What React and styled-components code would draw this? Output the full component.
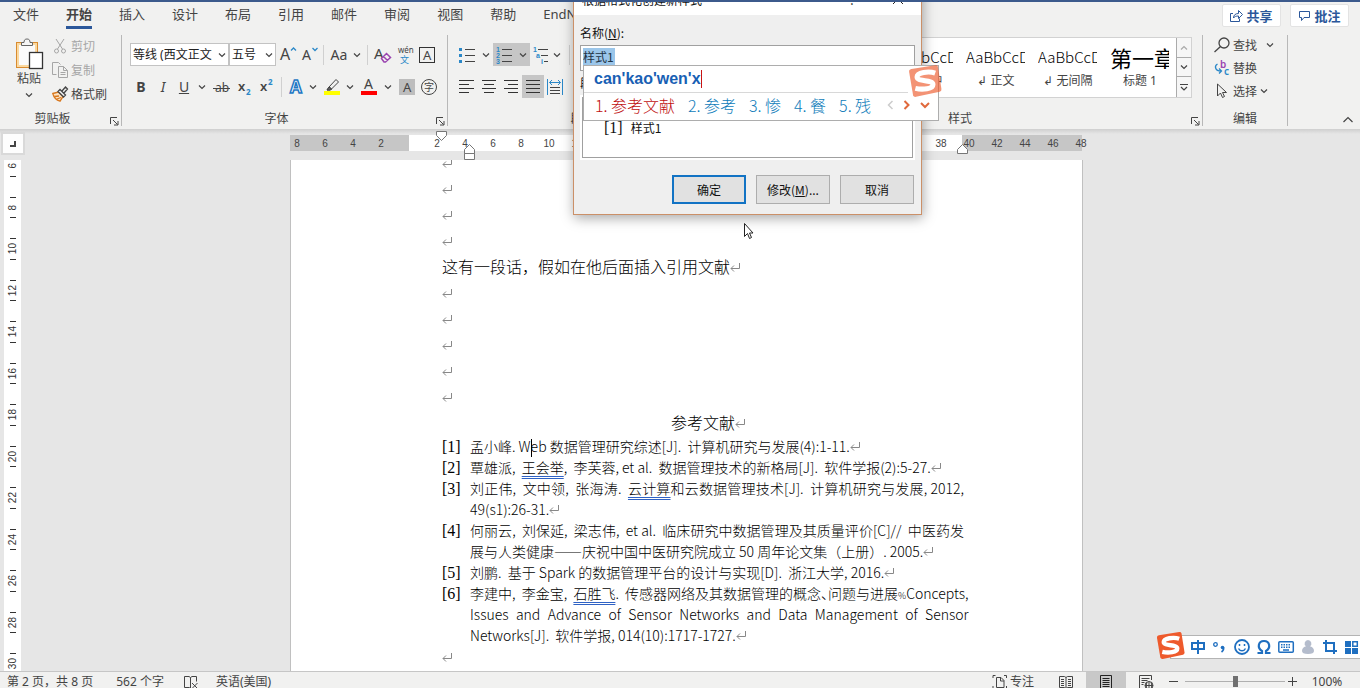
import React from "react";
import styled, { createGlobalStyle } from "styled-components";

const ui = `"Noto Sans CJK SC", "Noto Sans", sans-serif`;
const uiLatin = `"Noto Sans", "Noto Sans CJK SC", sans-serif`;

const GlobalStyle = createGlobalStyle`
  *, *::before, *::after { box-sizing: border-box; }
  html, body, #root { height: 100%; }
  body { margin: 0; overflow: hidden; font-family: ${uiLatin}; font-size: 12px; color: #444; background: #e6e6e6; }
  button, input, select { font: inherit; color: inherit; }
  button { border: 0; padding: 0; background: none; }
  svg { display: block; flex: none; overflow: visible; }
`;

const Window = styled.div`
  position: relative;
  display: flex;
  flex-direction: column;
  height: 100vh;
  overflow: hidden;
  border-top: 2px solid #3c5a8c;
`;

/* ---------- tabs ---------- */
const TabBar = styled.nav`
  display: flex;
  align-items: center;
  height: 33px;
  padding: 0 11px 6px 13px;
  background: #f1f1f0;
  flex: none;
`;
const Tabs = styled.div`
  display: flex;
  gap: 27px;
  flex: 1;
  overflow: hidden;
`;
const Tab = styled.button`
  font-size: 13px;
  line-height: 22px;
  height: 27px;
  white-space: nowrap;
  border-bottom: 3px solid ${(p) => (p.$active ? "#2b579a" : "transparent")};
  font-weight: ${(p) => (p.$active ? 700 : 400)};
`;
const TopButton = styled.button`
  display: flex;
  align-items: center;
  justify-content: center;
  gap: 3px;
  width: 59px;
  height: 23px;
  margin-left: 9px;
  background: #fff;
  border: 1px solid #e3e3e3;
  border-radius: 2px;
  color: #2b579a;
  font-size: 13px;
  font-weight: 700;
`;

/* ---------- ribbon ---------- */
const Ribbon = styled.div`
  display: flex;
  height: 94px;
  padding-bottom: 3px;
  background: #f1f1f0;
  flex: none;
`;
const Group = styled.section`
  display: flex;
  flex-direction: column;
  justify-content: space-between;
  width: ${(p) => (p.$width ? `${p.$width}px` : "auto")};
  flex: ${(p) => (p.$width ? "none" : "1")};
  border-right: 1px solid #b8b8b8;
  min-width: 0;
`;
const GroupFooter = styled.div`
  display: flex;
  align-items: center;
  height: 14px;
  line-height: 14px;
  text-align: center;
`;
const GroupName = styled.span`flex: 1;`;
const Launcher = styled.button`
  width: 16px;
  height: 10px;
  margin-top: 5px;
  padding-left: 5px;
`;
const ToolRows = styled.div`
  display: flex;
  flex-direction: column;
  gap: 9px;
  padding: 8px 0 0 8px;
`;
const ToolRow = styled.div`
  display: flex;
  align-items: center;
  height: 23px;
`;
const Tool = styled.button`
  display: flex;
  align-items: center;
  justify-content: center;
  width: ${(p) => p.$w || 22}px;
  height: 23px;
  font-size: 14px;
  background: ${(p) => (p.$on ? "#c6c6c6" : "none")};
  flex: none;
`;
const Rule = styled.span`
  width: 1px;
  height: 20px;
  margin: 0 ${(p) => p.$gap}px;
  background: #d0d0d0;
`;
const Combo = styled.label`
  display: grid;
  align-items: center;
  width: ${(p) => p.$w}px;
  height: 23px;
  & > * { grid-area: 1 / 1; }
  & > svg { justify-self: end; margin-right: 3px; pointer-events: none; }
`;
const Select = styled.select`
  appearance: none;
  width: 100%;
  height: 23px;
  padding: 0 16px 0 2px;
  border: 1px solid #c3c3c3;
  border-radius: 0;
  background: #fff;
  color: #222;
  text-overflow: clip;
`;
const ClipboardTools = styled.div`
  display: flex;
  padding-left: 13px;
`;
const PasteButton = styled.button`
  display: flex;
  flex-direction: column;
  align-items: center;
  width: 32px;
  margin-right: 7px;
  padding-top: 3px;
  line-height: 18px;
`;
const CommandList = styled.div`
  display: flex;
  flex-direction: column;
  gap: ${(p) => p.$gap}px;
  padding-left: ${(p) => p.$pad || 0}px;
`;
const Command = styled.button`
  display: flex;
  align-items: center;
  gap: 3px;
  height: ${(p) => p.$h}px;
  padding-bottom: 1px;
  color: ${(p) => (p.disabled ? "#a6a6a6" : "#444")};
`;
const Gallery = styled.div`
  display: flex;
  height: 61px;
  margin: 2px 10px 0;
  border: 1px solid #d2d2d2;
  background: #fff;
`;
const GalleryItems = styled.div`
  display: flex;
  justify-content: flex-end;
  flex: 1;
  overflow: hidden;
`;
const StyleItem = styled.button`
  display: flex;
  flex-direction: column;
  width: 72px;
  padding: 5px 6px 0;
  flex: none;
`;
const Sample = styled.span`
  width: 59px;
  height: 28px;
  line-height: 28px;
  overflow: hidden;
  white-space: nowrap;
  text-align: left;
  color: #000;
  font-family: ${ui};
  font-weight: ${(p) => (p.$big ? 400 : 300)};
  font-size: ${(p) => (p.$big ? 22 : 15)}px;
`;
const StyleName = styled.span`
  line-height: 20px;
  text-align: center;
`;
const GalleryScroll = styled.div`
  display: grid;
  grid-template-rows: 20px 19px 20px;
  width: 15px;
  border-left: 1px solid #ababab;
`;
const ScrollButton = styled.button`
  display: grid;
  place-items: center;
  border-bottom: 1px solid #ababab;
  background: #f6f6f6;
  &:last-child { border-bottom: 0; }
`;
const RibbonEnd = styled.div`
  display: flex;
  align-items: flex-end;
  justify-content: flex-end;
  width: 72px;
  padding-right: 6px;
  & > button { height: 13px; }
`;

/* ---------- workspace ---------- */
const Workspace = styled.main`
  display: flex;
  flex: 1;
  min-height: 0;
  background: linear-gradient(#cfcfcf, #e6e6e6 5px);
`;
const SideColumn = styled.div`
  display: flex;
  flex-direction: column;
  width: 26px;
`;
const TabStop = styled.button`
  display: grid;
  place-items: center;
  flex: none;
  width: 24px;
  height: 23px;
  margin: 3px 1px 5px;
  background: #fdfdfd;
  border: 2px solid #d9d9d9;
`;
const VerticalRuler = styled.div`
  flex: 1;
  width: 17px;
  margin-left: 4px;
  background: #fff;
  overflow: hidden;
`;
const VerticalScale = styled.div`margin-top: -15px;`;
const VerticalMark = styled.div`
  display: flex;
  flex-direction: column;
  align-items: center;
  justify-content: space-between;
  height: 42px;
  padding: 10px 0;
  &:nth-child(even) { height: 41px; }
  &::before, &::after { content: ""; width: 6px; height: 1px; background: #333; }
`;
const VerticalNumber = styled.span`
  writing-mode: vertical-rl;
  transform: rotate(180deg);
  font: 10px/12px "Liberation Sans", sans-serif;
  color: #333;
`;
const Canvas = styled.div`
  display: flex;
  flex-direction: column;
  align-items: center;
  flex: 1;
  padding-right: 13px;
`;
const Ruler = styled.div`
  position: relative;
  display: flex;
  width: 793px;
  height: 16px;
  margin: 6px 0 9px;
  flex: none;
`;
const RulerPart = styled.div`
  display: flex;
  justify-content: ${(p) => (p.$end ? "flex-end" : "flex-start")};
  width: ${(p) => p.$w}px;
  padding: ${(p) => p.$pad || 0};
  background: ${(p) => (p.$page ? "#fff" : "#c6c6c6")};
  flex: none;
  & > span:first-child { margin-left: ${(p) => p.$shift || 0}px; }
`;
const RulerNumber = styled.span`
  width: 28px;
  flex: none;
  text-align: center;
  font: 10px/17px "Liberation Sans", sans-serif;
  color: #444;
`;
const Indent = styled.span`
  position: absolute;
  left: ${(p) => p.$x}px;
  top: ${(p) => p.$y}px;
`;
const Page = styled.article`
  width: 793px;
  flex: 1;
  min-height: 0;
  padding: 0 118px 0 151px;
  background: #fff;
  border: solid #c0c0c0;
  border-width: 0 1px;
  overflow: hidden;
  color: #000;
  font-family: ${ui};
  font-weight: 300;
`;
const PageText = styled.div`margin-top: -11px;`;
const Para = styled.p`
  margin: 0;
  height: ${(p) => p.$h || 26}px;
  line-height: ${(p) => p.$h || 26}px;
  font-size: 16px;
  text-align: ${(p) => (p.$center ? "center" : "left")};
`;
const MarkBox = styled.span`
  display: inline-block;
  width: 0;
  height: 10px;
`;
const References = styled.ol`
  margin: 1px 0 0;
  padding: 0;
  list-style: none;
`;
const Reference = styled.li`
  display: grid;
  grid-template-columns: 28px 1fr;
  line-height: 21px;
`;
const RefNumber = styled.span`
  font: 400 16px/21px "Liberation Serif", serif;
`;
const RefLine = styled.span`
  display: block;
  height: 21px;
  font-size: 14px;
  white-space: nowrap;
  text-align-last: ${(p) => (p.$full ? "justify" : "left")};
`;
const Flagged = styled.span`
  text-decoration: underline double 1px #2f62c4;
  text-underline-offset: 3px;
`;
const HalfWidth = styled.span`font-feature-settings: "halt";`;
const Percent = styled.span`font-size: 9px;`;
const Caret = styled.span`
  display: inline-block;
  width: 1px;
  height: 18px;
  margin: 0 -1px 0 0;
  vertical-align: middle;
  background: #000;
`;

/* ---------- status bar ---------- */
const StatusBar = styled.footer`
  display: flex;
  align-items: flex-start;
  height: 17px;
  padding: 0 17px 0 7px;
  background: #f1f1f0;
  border-top: 1px solid #c6c6c6;
  overflow: hidden;
  flex: none;
`;
const StatusItem = styled.button`
  display: flex;
  align-items: center;
  justify-content: center;
  gap: 2px;
  height: 19px;
  line-height: 19px;
  white-space: nowrap;
  width: ${(p) => (p.$w ? `${p.$w}px` : "auto")};
  margin-right: ${(p) => p.$gap || 0}px;
  background: ${(p) => (p.$on ? "#c8c8c8" : "none")};
`;
const Spacer = styled.span`flex: 1;`;
const Zoom = styled.input`
  appearance: none;
  width: 100px;
  height: 19px;
  margin: 0 1px 0 5px;
  background: linear-gradient(#b0b0b0, #b0b0b0) center / 100% 1px no-repeat;
  &::-webkit-slider-thumb { appearance: none; width: 5px; height: 11px; background: #707070; }
`;

/* ---------- dialog ---------- */
const Dialog = styled.div`
  position: absolute;
  left: calc(50% - 107px);
  top: -18px;
  width: 349px;
  border: 1px solid #cb9068;
  background: #efefef;
  box-shadow: 1px 3px 12px rgba(0, 0, 0, 0.35);
  color: #111;
  font-family: ${ui};
`;
const TitleBar = styled.header`
  display: flex;
  align-items: center;
  height: 30px;
  padding: 0 17px 2px 8px;
  background: #fff;
`;
const DialogTitle = styled.span`flex: 1;`;
const TitleButton = styled.button`
  width: 12px;
  margin-left: 34px;
  font-size: 13px;
`;
const DialogBody = styled.form`
  display: flex;
  flex-direction: column;
  padding: 9px 6px 10px;
`;
const FieldLabel = styled.label`
  height: 18px;
  line-height: 18px;
  margin-bottom: 3px;
`;
const Field = styled.div`
  height: 26px;
  padding: 2px;
  margin-bottom: 3px;
  background: #fff;
  border: 1px solid #a0a0a0;
`;
const NameInput = styled.input`
  display: block;
  width: 32px;
  height: 17px;
  padding: 0;
  border: 0;
  outline: 0;
  background: #9bc6ea;
  color: #234;
`;
const Preview = styled.div`
  height: 65px;
  padding: 2px;
  background: #fff;
`;
const PreviewInner = styled.div`
  display: flex;
  gap: 8px;
  height: 61px;
  padding: 20px 21px 0;
  line-height: 20px;
  border: 1px solid #a0a0a0;
`;
const SerifText = styled.span`
  font: 16px/20px "Liberation Serif", serif;
`;
const DialogButtons = styled.div`
  display: flex;
  justify-content: flex-end;
  gap: 10px;
  margin: 15px 1px 0 0;
`;
const DialogButton = styled.button`
  width: 74px;
  height: 29px;
  background: #e1e1e1;
  border: ${(p) => (p.$primary ? "2px solid #1273c4" : "1px solid #adadad")};
`;

/* ---------- input method ---------- */
const ImePopup = styled.div`
  position: absolute;
  left: calc(50% - 97px);
  top: 63px;
  width: 356px;
  height: 56px;
  background: #fff;
  border: 1px solid #adadad;
`;
const ImeTyped = styled.div`
  display: flex;
  align-items: center;
  height: 27px;
  margin-right: 30px;
  padding-left: 10px;
  border-bottom: 1px solid #d8d8d8;
  font: 700 16px/26px "Liberation Sans", sans-serif;
  color: #1860b4;
  &::after { content: ""; width: 1px; height: 18px; background: #c81414; }
`;
const Candidates = styled.ol`
  display: flex;
  align-items: center;
  gap: 13px;
  height: 27px;
  margin: 0;
  padding: 0 0 3px 11px;
  list-style: none;
  font: 300 16px/24px "Noto Sans CJK SC", sans-serif;
  color: #0f7cba;
`;
const Candidate = styled.li`
  display: flex;
  color: ${(p) => (p.$first ? "#c01010" : "inherit")};
`;
const CandidateIndex = styled.span`width: 16px;`;
const CandidateNav = styled.div`
  display: flex;
  gap: 9px;
  margin-left: 2px;
`;
const ImeLogo = styled.div`
  position: absolute;
  right: -4px;
  top: -2px;
  opacity: 0.65;
`;
const ImeBar = styled.div`
  position: absolute;
  right: 0;
  bottom: 29px;
  display: flex;
  align-items: center;
  gap: 6px;
  width: 190px;
  height: 24px;
  padding-left: 19px;
  background: #fff;
  border: 1px solid #b4b4b4;
  border-right: 0;
`;
const ImeBarLogo = styled.div`
  position: absolute;
  left: -15px;
  top: -5px;
`;
const ImeKey = styled.button`
  display: grid;
  place-items: center;
  width: 16px;
  height: 18px;
`;
const Pointer = styled.div`
  position: absolute;
  left: calc(50% + 63px);
  top: 220px;
`;

/* ---------- drawings ---------- */
const Svg = ({ w = 16, h = 16, children, ...rest }) => (
  <svg width={w} height={h} viewBox={`0 0 ${w} ${h}`} fill="none" stroke="#444" aria-hidden="true" {...rest}>
    {children}
  </svg>
);
const Chevron = ({ stroke = "#444", d = "M1 1.5l3 3 3-3", w = 8, h = 6, sw = 1.2 }) => (
  <Svg w={w} h={h} stroke={stroke} strokeWidth={sw}><path d={d} /></Svg>
);
const Mark = () => (
  <MarkBox>
    <Svg w={11} h={9} stroke="#888"><path d="M9.500 0v5.500H1M4 2.500l-3 3 3 3" /></Svg>
  </MarkBox>
);
const LauncherIcon = () => (
  <Svg w={9} h={9}><path d="M.5 7V.5H7M3 3l4.500 4.500M8 4v4H4" /></Svg>
);
const PasteIcon = () => (
  <Svg w={30} h={32}>
    <rect x="2.500" y="4.500" width="21" height="25" fill="#fbd9a0" stroke="#d98c30" />
    <rect x="5" y="7" width="16" height="20" fill="#fbfbfb" stroke="none" />
    <path d="M7.500 7.500V4.500H10C10 2 11 1 13 1s3 1 3 3.500h2.500v3z" fill="#f6f6f6" stroke="#666" />
    <rect x="15.500" y="14.500" width="13" height="16" fill="#fff" stroke="#333" strokeWidth="1.300" />
  </Svg>
);
const ScissorsIcon = () => (
  <Svg stroke="#a6a6a6"><path d="M4 1l6.500 10M12 1L5.500 11" /><circle cx="4.500" cy="13" r="2" /><circle cx="11.500" cy="13" r="2" /></Svg>
);
const CopyIcon = () => (
  <Svg stroke="#a6a6a6"><path d="M4.500 12.500h-4V.5h6l2 2M6.500 4.500h5l4 4v7h-9zM11.500 4.500v4h4M8.500 10.500h5M8.500 12.500h5" /></Svg>
);
const BrushIcon = () => (
  <Svg>
    <path d="M.8 7.500L6.500 6l4.500 4.500L8 15.200C5.500 14.500 2 12 .8 7.500z" fill="#fbe3c4" stroke="#d9781e" strokeWidth="1.300" />
    <path d="M2.500 10.500l4.500-.5M5 13l4-1.500" stroke="#d9781e" strokeWidth="1.300" />
    <path d="M6 5.500L8 3.500l5.500 5.500-2 2zM10 5l3.500-4 2 2L12 7" fill="#f1f1f0" strokeWidth="1.300" />
  </Svg>
);
const Lines = ({ rows, stroke = "#333" }) => (
  <Svg stroke={stroke}>{rows.map(([a, b], i) => <path key={i} d={`M${a} ${1.5 + i * 4}H${b}`} />)}</Svg>
);
const tiny = { stroke: "none", fill: "#2b88c8", fontSize: 7, fontFamily: "Liberation Sans, sans-serif", fontWeight: 700 };
const BulletsIcon = () => (
  <Svg><path d="M6 2.500h10M6 8.500h10M6 14.500h10" /><path d="M0 1h3v3H0zM0 7h3v3H0zM0 13h3v3H0z" fill="#2b88c8" stroke="none" /></Svg>
);
const NumberingIcon = () => (
  <Svg h={18}><path d="M6 3.500h10M6 9.500h10M6 15.500h10" /><text x="0" y="6" {...tiny}>1</text><text x="0" y="12" {...tiny}>2</text><text x="0" y="18" {...tiny}>3</text></Svg>
);
const MultiIcon = () => (
  <Svg h={18}><path d="M5 3.500h10M8 9.500h7M11 15.500h4" /><text x="0" y="6" {...tiny}>1</text><text x="3" y="12" {...tiny}>a</text><text x="8" y="18" {...tiny}>i</text></Svg>
);
const DistributeIcon = () => (
  <Svg h={18}><path d="M.5 1v16M15.500 1v16M2.500 4.500h11M5 2L2.500 4.500 5 7M11 2l2.500 2.500L11 7" stroke="#2b88c8" /><path d="M3 9.500h10M3 12.500h10M3 15.500h10" /></Svg>
);
const glyph = { stroke: "none", fill: "#444", fontFamily: "Noto Sans, sans-serif" };
const GrowIcon = ({ down }) => (
  <Svg w={18} h={18}><text x="1" y="14" {...glyph} fontSize={down ? 14 : 16}>A</text><path d={down ? "M11.500 2l2.500 2.500L16.500 2" : "M12 4.500L14.500 2 17 4.500"} stroke="#2b88c8" strokeWidth="1.300" /></Svg>
);
const ClearIcon = () => (
  <Svg w={18} h={18}><text x="0" y="13" {...glyph} fontSize="15">A</text><path d="M7.500 12.500l5-5 4 4-5 4.500h-1.500zM9.500 10.500l4 4" fill="#f1f1f0" stroke="#9a44b0" strokeWidth="1.500" /></Svg>
);
const PhoneticIcon = () => (
  <Svg w={16} h={20}><text x="1" y="8" {...glyph} fontSize="8">wén</text><text x="3" y="18" {...glyph} fontFamily="Noto Sans CJK SC, sans-serif" fontSize="9" fill="#2b88c8">文</text></Svg>
);
const BoxedIcon = () => (
  <Svg><rect x=".5" y=".5" width="15" height="15" stroke="#333" /><text x="4" y="13" {...glyph} fontSize="13">A</text></Svg>
);
const ShadeIcon = () => (
  <Svg><rect width="16" height="16" fill="#bdbdbd" stroke="none" /><text x="4" y="13" {...glyph} fontSize="13">A</text></Svg>
);
const EncloseIcon = () => (
  <Svg><circle cx="8" cy="8" r="7.500" /><text x="3" y="12" {...glyph} fontFamily="Noto Sans CJK SC, sans-serif" fontSize="10">字</text></Svg>
);
const EffectIcon = () => (
  <Svg><text x="2" y="14" fontFamily="Noto Sans, sans-serif" fontWeight="700" fontSize="17" fill="#fff" stroke="#1f78c4" strokeWidth="1.500">A</text></Svg>
);
const PenIcon = () => (
  <Svg h={18}><path d="M5 9l7-7.500 2.500 2.500L7.500 11zM5 9l-2 3h3l1.500-1z" fill="#f1f1f0" /><path d="M3 12l2-3 2.500 2-1 1z" fill="#666" /><path d="M0 13h16v4H0z" fill="#ff0" stroke="none" /></Svg>
);
const FontColorIcon = () => (
  <Svg h={18}><text x="3" y="11" {...glyph} fontSize="14">A</text><path d="M0 13h16v4H0z" fill="#f00" stroke="none" /></Svg>
);
const StrikeIcon = () => (
  <Svg w={18}><text x="2" y="13" {...glyph} fontSize="12">ab</text><path d="M0 9.500h17" /></Svg>
);
const ScriptIcon = ({ up }) => (
  <Svg><text x="1" y="12" {...glyph} fontWeight="600" fontSize="13">x</text><text x="9" y={up ? 6 : 16} {...glyph} fontSize="8" fontWeight="700" fill="#2b88c8">2</text></Svg>
);
const SearchIcon = () => (
  <Svg strokeWidth="1.300"><circle cx="10" cy="6" r="5" /><path d="M6.500 9.500L.5 15" /></Svg>
);
const ReplaceIcon = () => (
  <Svg>
    <text x="6" y="8" {...glyph} fontSize="10" fontWeight="600" fill="#9a44b0">b</text>
    <text x="10" y="15" {...glyph} fontSize="10" fontWeight="600" fill="#2b88c8">c</text>
    <path d="M3.500 4C0 6 1 11 7 11M5 8.500L7.500 11 5 13.500" stroke="#2b88c8" strokeWidth="1.300" />
  </Svg>
);
const ArrowIcon = () => (
  <Svg><path d="M3.500 1v12l3-3 2 4.500 2-1L8.500 9.500h4z" /></Svg>
);
const ShareIcon = () => (
  <Svg w={13} h={13} stroke="#2b579a"><path d="M3 4.500H.5v8h9V9.500M3.500 9c0-3 2-4.500 5-4.500v-3l4 4-4 4V7C6 7 4.500 7.500 3.500 9z" /></Svg>
);
const CommentIcon = () => (
  <Svg w={13} h={13} stroke="#2b579a"><path d="M1.500 2.500h10v6H6l-2.500 3v-3h-2z" /></Svg>
);
const SogouLogo = ({ size }) => (
  <svg width={size} height={size} viewBox="0 0 30 30" aria-hidden="true">
    <path d="M3 4.500L24 1q2-.3 2.400 1.500L29.500 22q.3 2-1.500 2.500L7 29q-2 .3-2.500-1.500L1 7q-.3-2 2-2.500z" fill="#ee5a2c" />
    <path d="M24 8C18 6 8 7.500 8 11.500c0 4.500 14 2 14 6.500 0 4-9 5-15.500 3.500" fill="none" stroke="#fff" strokeWidth="4.500" />
  </svg>
);
const blue = "#1f6fc0";
const barIcons = {
  中文: <Svg stroke={blue} strokeWidth="2"><path d="M2 4h12v6H2zM8 1v14" /></Svg>,
  标点: <Svg stroke={blue} strokeWidth="1.300"><circle cx="3.500" cy="5.500" r="1.800" /><circle cx="10.500" cy="8.500" r="1.800" fill={blue} stroke="none" /><path d="M11.500 8.500c.3 2-.5 3.500-2 4.500" strokeWidth="1.800" /></Svg>,
  表情: <Svg stroke={blue} strokeWidth="1.800"><circle cx="8" cy="8" r="7" /><path d="M5.500 5v2M10.500 5v2M4.500 9.500c1.500 3 5.500 3 7 0" strokeWidth="1.500" /></Svg>,
  符号: <Svg stroke={blue} strokeWidth="2.200"><path d="M1.500 14H6v-2C1 9 2 2 8 2s7 7 2 10v2h4.500" /></Svg>,
  键盘: <Svg stroke={blue} strokeWidth="1.500"><rect x=".8" y="2.800" width="14.500" height="10.500" rx="1" /><path d="M3 5.800h10M3 8.300h10" strokeDasharray="1.500 1" /><path d="M5 11h6" /></Svg>,
  用户: <Svg stroke="none"><path d="M8 1a3.500 3.500 0 0 1 2 6.300c3 .5 4 3 4 4.700 0 2-2 3-6 3s-6-1-6-3c0-1.700 1-4.200 4-4.700A3.500 3.500 0 0 1 8 1z" fill="#b4bccc" /></Svg>,
  截图: <Svg stroke={blue} strokeWidth="2"><path d="M4 1v11h11M1 4h11v11" /></Svg>,
  工具箱: <Svg stroke="none" fill={blue}><path d="M1 2h6v6H1zM1 9h6v6H1zM8 9h6v6H8z" /><path d="M8.800 2.800h4.500v4.500H8.800z" fill="none" stroke={blue} strokeWidth="1.500" /></Svg>,
};

const T = ({ label, children, ...rest }) => <Tool type="button" aria-label={label} {...rest}>{children}</Tool>;
const Footer = ({ name, launcher = true }) => (
  <GroupFooter>
    <GroupName>{name}</GroupName>
    {launcher && <Launcher type="button" aria-label={`${name}设置`}><LauncherIcon /></Launcher>}
  </GroupFooter>
);
const range = (from, to, step = 2) => Array.from({ length: Math.abs(to - from) / step + 1 }, (_, i) => from + (to > from ? i : -i) * step);

const tabs = ["文件", "开始", "插入", "设计", "布局", "引用", "邮件", "审阅", "视图", "帮助", "EndNote X9"];
const styles = [
  ["AaBbCcDd", "↲ 引文"], ["AaBbCcDd", "↲ 图题"], ["AaBbCcDd", "↲ 居中"],
  ["AaBbCcDd", "↲ 正文"], ["AaBbCcDd", "↲ 无间隔"], ["第一章", "标题 1", true],
];
const references = [
  [<>孟小峰. W<Caret />eb 数据管理研究综述[J]. &nbsp;计算机研究与发展(4):1-11.</>],
  [<>覃雄派, &nbsp;<Flagged>王会举</Flagged>, &nbsp;李芙蓉, et al. &nbsp;数据管理技术的新格局[J]. &nbsp;软件学报(2):5-27.</>],
  [<>刘正伟, &nbsp;文中领, &nbsp;张海涛. &nbsp;<Flagged>云计算</Flagged>和云数据管理技术[J]. &nbsp;计算机研究与发展, 2012,</>, <>49(s1):26-31.</>],
  [<>何丽云, &nbsp;刘保延, &nbsp;梁志伟, &nbsp;et al. &nbsp;临床研究中数据管理及其质量评价[C]// &nbsp;中医药发</>, <>展与人类健康——庆祝中国中医研究院成立 50 周年论文集（上册）. 2005.</>],
  [<>刘鹏. &nbsp;基于 Spark 的数据管理平台的设计与实现[D]. &nbsp;浙江大学, 2016.</>],
  [<>李建中, &nbsp;李金宝, &nbsp;<Flagged>石胜飞</Flagged>. &nbsp;传感器网络及其数据管理的概念<HalfWidth>、</HalfWidth>问题与进展<Percent>%</Percent>Concepts,</>, <>Issues and Advance of Sensor Networks and Data Management of Sensor</>, <>Networks[J]. &nbsp;软件学报, 014(10):1717-1727.</>],
];

export default function App() {
  return (
    <Window lang="zh-CN">
      <GlobalStyle />
      <TabBar>
        <Tabs>{tabs.map((t) => <Tab key={t} type="button" $active={t === "开始"}>{t}</Tab>)}</Tabs>
        <TopButton type="button"><ShareIcon />共享</TopButton>
        <TopButton type="button"><CommentIcon />批注</TopButton>
      </TabBar>

      <Ribbon>
        <Group $width={122}>
          <ClipboardTools>
            <PasteButton type="button"><PasteIcon />粘贴<Chevron h={12} d="M1 5.500l3 3 3-3" /></PasteButton>
            <CommandList $gap={1}>
              <Command type="button" $h={23} disabled><ScissorsIcon />剪切</Command>
              <Command type="button" $h={23} disabled><CopyIcon />复制</Command>
              <Command type="button" $h={23}><BrushIcon />格式刷</Command>
            </CommandList>
          </ClipboardTools>
          <Footer name="剪贴板" />
        </Group>

        <Group $width={326}>
          <ToolRows>
            <ToolRow>
              <Combo $w={99}><Select aria-label="字体"><option>等线 (西文正文)</option></Select><Chevron /></Combo>
              <Combo $w={47}><Select aria-label="字号"><option>五号</option></Select><Chevron /></Combo>
              <T label="增大字号" $w={24}><GrowIcon /></T>
              <T label="减小字号" $w={20}><GrowIcon down /></T>
              <Rule $gap={3} />
              <T label="更改大小写" $w={24}>Aa</T>
              <T label="大小写选项" $w={12}><Chevron /></T>
              <Rule $gap={4} />
              <T label="清除格式"><ClearIcon /></T>
              <T label="拼音指南"><PhoneticIcon /></T>
              <T label="字符边框"><BoxedIcon /></T>
            </ToolRow>
            <ToolRow>
              <T label="加粗"><b>B</b></T>
              <T label="倾斜"><i>I</i></T>
              <T label="下划线" $w={20}><u>U</u></T>
              <T label="下划线选项" $w={16}><Chevron /></T>
              <T label="删除线" $w={24}><StrikeIcon /></T>
              <T label="下标"><ScriptIcon /></T>
              <T label="上标"><ScriptIcon up /></T>
              <Rule $gap={3} />
              <T label="文本效果"><EffectIcon /></T>
              <T label="文本效果选项" $w={12}><Chevron /></T>
              <T label="突出显示" $w={26}><PenIcon /></T>
              <T label="突出显示选项" $w={10}><Chevron /></T>
              <T label="字体颜色" $w={28}><FontColorIcon /></T>
              <T label="字体颜色选项" $w={10}><Chevron /></T>
              <T label="字符底纹" $w={28}><ShadeIcon /></T>
              <T label="带圈字符" $w={16}><EncloseIcon /></T>
            </ToolRow>
          </ToolRows>
          <Footer name="字体" />
        </Group>

        <Group $width={286}>
          <ToolRows>
            <ToolRow>
              <T label="项目符号"><BulletsIcon /></T>
              <T label="项目符号选项" $w={15}><Chevron /></T>
              <T label="编号" $on><NumberingIcon /></T>
              <T label="编号选项" $w={15} $on><Chevron /></T>
              <T label="多级列表"><MultiIcon /></T>
              <T label="多级列表选项" $w={10}><Chevron /></T>
              <Rule $gap={7} />
            </ToolRow>
            <ToolRow>
              <T label="左对齐"><Lines rows={[[0, 15], [0, 10], [0, 15], [0, 10]]} /></T>
              <T label="居中"><Lines rows={[[1, 15], [3, 13], [1, 15], [3, 13]]} /></T>
              <T label="右对齐"><Lines rows={[[1, 15], [5, 15], [1, 15], [5, 15]]} /></T>
              <T label="两端对齐" $on><Lines rows={[[1, 15], [1, 15], [1, 15], [1, 15]]} /></T>
              <T label="分散对齐"><DistributeIcon /></T>
            </ToolRow>
          </ToolRows>
          <Footer name="段落" />
        </Group>

        <Group>
          <Gallery>
            <GalleryItems>
              {styles.map(([s, n, big]) => (
                <StyleItem key={n} type="button"><Sample $big={big}>{s}</Sample><StyleName>{n}</StyleName></StyleItem>
              ))}
            </GalleryItems>
            <GalleryScroll>
              <ScrollButton type="button" aria-label="上一行"><Chevron d="M1 4.500l3-3 3 3" stroke="#aaa" /></ScrollButton>
              <ScrollButton type="button" aria-label="下一行"><Chevron /></ScrollButton>
              <ScrollButton type="button" aria-label="其他"><Chevron h={8} d="M0 1.500h8M1 4l3 3 3-3" /></ScrollButton>
            </GalleryScroll>
          </Gallery>
          <Footer name="样式" />
        </Group>

        <Group $width={85}>
          <CommandList $gap={2} $pad={11}>
            <Command type="button" $h={21}><SearchIcon />查找<Chevron w={14} d="M7 1.500l3 3 3-3" /></Command>
            <Command type="button" $h={21}><ReplaceIcon />替换</Command>
            <Command type="button" $h={21}><ArrowIcon />选择<Chevron /></Command>
          </CommandList>
          <Footer name="编辑" launcher={false} />
        </Group>
        <RibbonEnd>
          <T label="折叠功能区" $w={12}><Chevron w={10} h={7} d="M.5 6L5 1.500 9.500 6" /></T>
        </RibbonEnd>
      </Ribbon>

      <Workspace>
        <SideColumn>
          <TabStop type="button" aria-label="左对齐制表符"><Svg w={8} h={8} strokeWidth="2"><path d="M1 6h5V1" /></Svg></TabStop>
          <VerticalRuler>
            <VerticalScale>
              {range(6, 30).map((n) => <VerticalMark key={n}><VerticalNumber>{n}</VerticalNumber></VerticalMark>)}
            </VerticalScale>
          </VerticalRuler>
        </SideColumn>
        <Canvas>
          <Ruler>
            <RulerPart $w={119} $end $pad="0 14px 0 0">{range(8, 2).map((n) => <RulerNumber key={n}>{n}</RulerNumber>)}</RulerPart>
            <RulerPart $w={553} $page $pad="0 0 0 14px">{range(2, 38).map((n) => <RulerNumber key={n}>{n}</RulerNumber>)}</RulerPart>
            <RulerPart $w={120} $shift={-7}>{range(40, 48).map((n) => <RulerNumber key={n}>{n}</RulerNumber>)}</RulerPart>
            <Indent $x={146} $y={-4}><Svg w={11} h={11} fill="#fff" stroke="#777"><path d="M.5.5h10v4l-5 5-5-5z" /></Svg></Indent>
            <Indent $x={174} $y={9}><Svg w={11} h={17} fill="#fff" stroke="#777"><path d="M.5 9.500v-4l5-5 5 5v4zM.5 9.500h10v6H.5z" /></Svg></Indent>
            <Indent $x={667} $y={9}><Svg w={11} h={11} fill="#fff" stroke="#777"><path d="M.5 9.500v-4l5-5 5 5v4z" /></Svg></Indent>
          </Ruler>
          <Page>
            <PageText>
              {[0, 1, 2, 3].map((i) => <Para key={i}><Mark /></Para>)}
              <Para>这有一段话，假如在他后面插入引用文献<Mark /></Para>
              {[0, 1, 2, 3, 4].map((i) => <Para key={i}><Mark /></Para>)}
              <Para $center>参考文献<Mark /></Para>
              <References>
                {references.map((lines, i) => (
                  <Reference key={i}>
                    <RefNumber>[{i + 1}]</RefNumber>
                    <div>
                      {lines.map((text, j) => {
                        const last = j === lines.length - 1;
                        return <RefLine key={j} $full={!last}>{text}{last && <Mark />}</RefLine>;
                      })}
                    </div>
                  </Reference>
                ))}
              </References>
              <Para $h={20}><Mark /></Para>
            </PageText>
          </Page>
        </Canvas>
      </Workspace>

      <StatusBar>
        <StatusItem type="button" $gap={23}>第 2 页，共 8 页</StatusItem>
        <StatusItem type="button" $gap={19}>562 个字</StatusItem>
        <StatusItem type="button" $gap={17} aria-label="校对"><Svg><path d="M7.500 3.500L6 2.500H1.500v11H6l1.500 1V3.500L9 2.500h4.500v5M9 9l5.500 5.500M14.500 9L9 14.500" /></Svg></StatusItem>
        <StatusItem type="button">英语(美国)</StatusItem>
        <Spacer />
        <StatusItem type="button" $gap={12}><Svg><path d="M1 4V1.500h2.500M12 1.500h2.500V4M1 12v2.500h2.500M12 14.500h2.500V12M4.500 3.500H9l3 3v7H4.500zM8.500 3.500V7H12" /></Svg>专注</StatusItem>
        <StatusItem type="button" $w={40} aria-label="阅读视图"><Svg><path d="M8 3.500L6.500 2.500h-5v11h5L8 14.500l1.500-1h5v-11h-5L8 3.500v11M3 5.500h3M3 7.500h3M3 9.500h3M3 11.500h3M10 5.500h3M10 7.500h3M10 9.500h3M10 11.500h3" /></Svg></StatusItem>
        <StatusItem type="button" $w={40} $on aria-label="页面视图"><Svg stroke="#222"><path d="M2.500 1.500h11v14h-11zM4.500 4.500h7M4.500 6.500h7M4.500 8.500h7M4.500 10.500h7M4.500 12.500h7" /></Svg></StatusItem>
        <StatusItem type="button" $w={40} aria-label="Web 视图"><Svg><path d="M13.500 6V1.500h-12v13H7M3.500 4.500h8M3.500 6.500h6M3.500 8.500h3M3.500 10.500h2" /><circle cx="11" cy="11.500" r="4" /><path d="M7 11.500h8M11 7.500v8M9 8.500c-1 2-1 4 0 6M13 8.500c1 2 1 4 0 6" /></Svg></StatusItem>
        <StatusItem type="button" $w={14} aria-label="缩小"><Svg w={9} h={9}><path d="M0 4.500h9" /></Svg></StatusItem>
        <Zoom type="range" aria-label="显示比例" defaultValue="50" />
        <StatusItem type="button" $w={13} $gap={12} aria-label="放大"><Svg w={9} h={9}><path d="M0 4.500h9M4.500 0v9" /></Svg></StatusItem>
        <StatusItem type="button" $w={32}>100%</StatusItem>
      </StatusBar>

      <Dialog role="dialog" aria-label="根据格式化创建新样式">
        <TitleBar>
          <DialogTitle>根据格式化创建新样式</DialogTitle>
          <TitleButton type="button">?</TitleButton>
          <TitleButton type="button" aria-label="关闭"><Svg w={12} h={12} stroke="#222"><path d="M1 1l10 10M11 1L1 11" /></Svg></TitleButton>
        </TitleBar>
        <DialogBody onSubmit={(e) => e.preventDefault()}>
          <FieldLabel htmlFor="style-name">名称(<u>N</u>):</FieldLabel>
          <Field><NameInput id="style-name" defaultValue="样式1" /></Field>
          <FieldLabel as="div">段落样式预览:</FieldLabel>
          <Preview>
            <PreviewInner><SerifText>[1]</SerifText><span>样式1</span></PreviewInner>
          </Preview>
          <DialogButtons>
            <DialogButton $primary>确定</DialogButton>
            <DialogButton type="button">修改(<u>M</u>)...</DialogButton>
            <DialogButton type="button">取消</DialogButton>
          </DialogButtons>
        </DialogBody>
      </Dialog>

      <ImePopup>
        <ImeTyped>can'kao'wen'x</ImeTyped>
        <Candidates>
          {["参考文献", "参考", "惨", "餐", "残"].map((c, i) => (
            <Candidate key={c} $first={i === 0}><CandidateIndex>{i + 1}.</CandidateIndex>{c}</Candidate>
          ))}
          <CandidateNav>
            <Chevron w={8} h={10} d="M6.500 1l-4 4 4 4" stroke="#ccc" sw={1.5} />
            <Chevron w={8} h={10} d="M1.500 1l4 4-4 4" stroke="#e0693c" sw={2} />
            <Chevron w={10} h={10} d="M1 3l4 4 4-4" stroke="#e0693c" sw={2} />
          </CandidateNav>
        </Candidates>
        <ImeLogo><SogouLogo size={34} /></ImeLogo>
      </ImePopup>

      <Pointer><Svg w={12} h={18} fill="#fff" stroke="#222"><path d="M1.500 1.500v13l3-3 2 5 2-1-2-4.500H10z" /></Svg></Pointer>

      <ImeBar>
        <ImeBarLogo><SogouLogo size={29} /></ImeBarLogo>
        {Object.entries(barIcons).map(([name, icon]) => <ImeKey key={name} type="button" aria-label={name}>{icon}</ImeKey>)}
      </ImeBar>
    </Window>
  );
}
